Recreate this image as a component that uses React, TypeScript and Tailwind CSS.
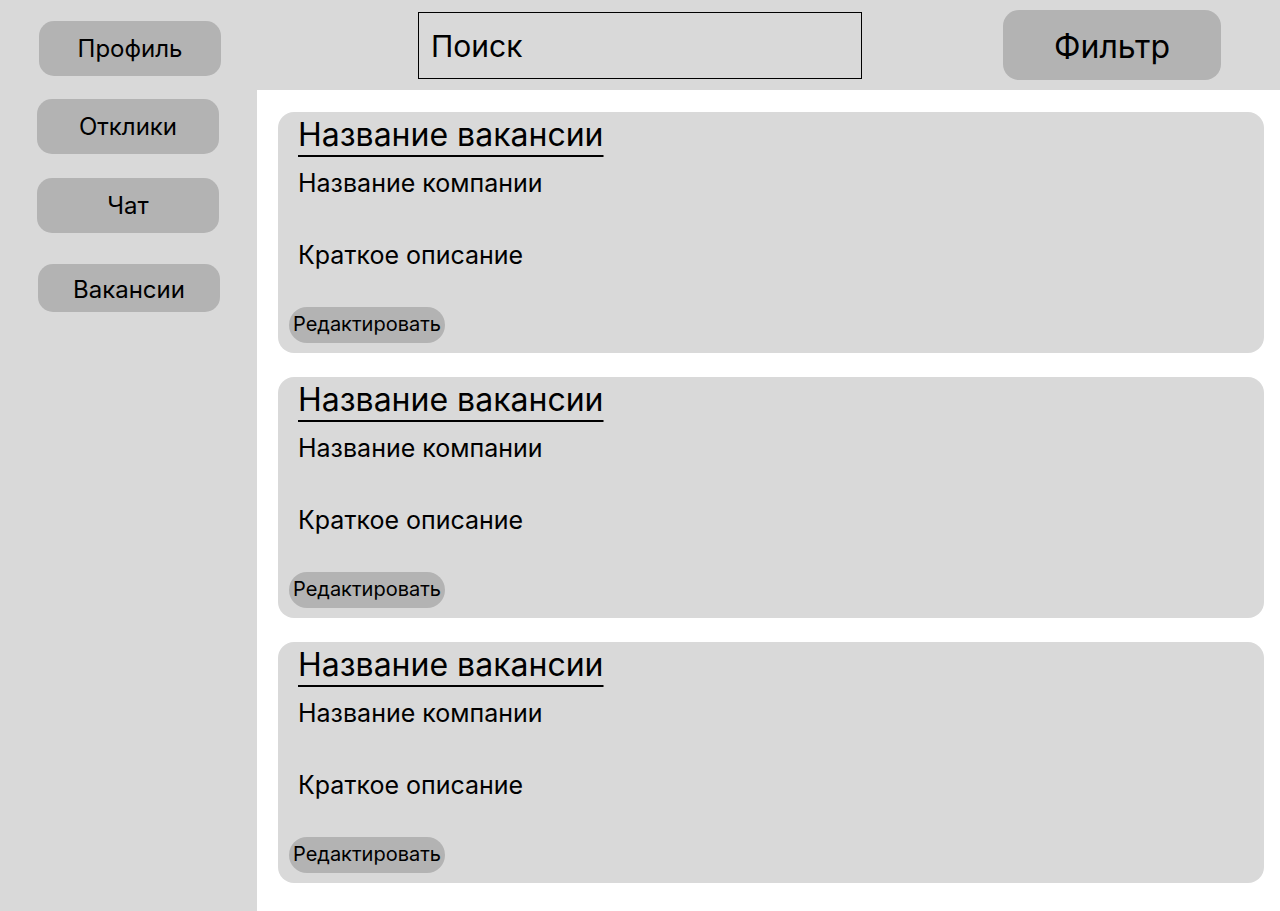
const navItems = [
  { label: 'Профиль', cls: 'ml-[39px] mt-[21px] h-[55px]' },
  { label: 'Отклики', cls: 'ml-[37px] mt-[23px] h-[55px]' },
  { label: 'Чат', cls: 'ml-[37px] mt-[24px] h-[55px]' },
  { label: 'Вакансии', cls: 'ml-[38px] mt-[31px] h-[48px] pt-[3px]' },
];

function VacancyCard() {
  return (
    <div className="w-[986px] h-[241px] bg-[#d9d9d9] rounded-[16px] flex flex-col">
      <div className="pl-5 pt-[3px]">
        <span className="text-[32px] leading-[40px] underline decoration-2 underline-offset-[9px]">
          Название вакансии
        </span>
      </div>
      <div className="pl-5 mt-[12px] text-[25px] leading-[32px]">Название компании</div>
      <div className="pl-5 mt-[40px] text-[25px] leading-[32px]">Краткое описание</div>
      <div className="pl-[11px] mt-auto mb-[10px]">
        <button className="h-[36px] px-[4px] pb-[2px] rounded-full bg-[#b3b3b3] text-[20px] leading-none">
          Редактировать
        </button>
      </div>
    </div>
  );
}

export default function App() {
  return (
    <div
      className="w-[1280px] h-[911px] flex bg-white text-black overflow-hidden"
      style={{ fontFamily: 'Inter, "Noto Sans", sans-serif' }}
    >
      {/* Sidebar */}
      <div className="w-[257px] h-full bg-[#d9d9d9] flex flex-col">
        {navItems.map((item) => (
          <button
            key={item.label}
            className={`${item.cls} w-[182px] rounded-[15px] bg-[#b3b3b3] text-[24px] flex items-center justify-center`}
          >
            {item.label}
          </button>
        ))}
      </div>

      {/* Right side */}
      <div className="flex-1 flex flex-col">
        <div className="h-[90px] bg-[#d9d9d9] flex items-start">
          <div className="ml-[161px] mt-[12px] w-[444px] h-[67px] border border-black flex items-center pl-[12px] pt-[2px] text-[30px]">
            Поиск
          </div>
          <button className="ml-[141px] mt-[10px] w-[218px] h-[70px] pt-[3px] rounded-[16px] bg-[#b3b3b3] text-[32px] flex items-center justify-center">
            Фильтр
          </button>
        </div>

        <div className="flex-1 pt-[22px] pl-[21px] flex flex-col gap-[24px]">
          <VacancyCard />
          <VacancyCard />
          <VacancyCard />
        </div>
      </div>
    </div>
  );
}
